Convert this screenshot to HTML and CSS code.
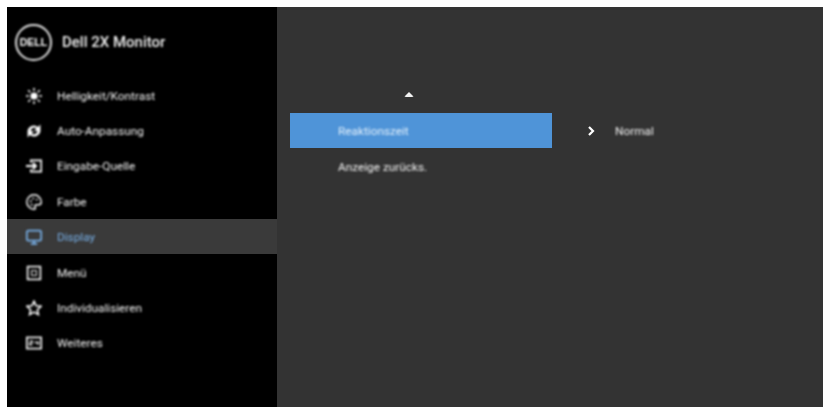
FILE: index.html
```html
<!DOCTYPE html>
<html lang="de">
<head>
<meta charset="utf-8">
<title>Dell 2X Monitor</title>
<link rel="stylesheet" href="styles.css">
</head>
<body>
<div class="osd">
  <aside class="sidebar">
    <header class="brand">
      <div class="logo"><span class="logo-text">DELL</span></div>
      <span class="brand-name">Dell 2X Monitor</span>
    </header>
    <nav class="menu">
      <div class="item">
        <svg class="icon" viewBox="0 0 20 20"><circle cx="10" cy="10" r="4.500" fill="#fff"/><path d="M10 0v3.500M10 16.500V20M0 10h3.500M16.500 10H20M2.800 2.800l2.500 2.500M14.700 14.700l2.500 2.500M2.800 17.200l2.500-2.500M14.700 5.300l2.500-2.500" stroke="#fff" stroke-width="2" fill="none"/></svg>
        <span>Helligkeit/Kontrast</span>
      </div>
      <div class="item">
        <svg class="icon" viewBox="0 0 20 20"><path d="M2 12a8 8 0 0 1 13-7l3-3v8h-8l3-3a4.500 4.500 0 0 0-7 5zM18 8a8 8 0 0 1-13 7l-3 3v-8h8l-3 3a4.500 4.500 0 0 0 7-5z" fill="#fff"/></svg>
        <span>Auto-Anpassung</span>
      </div>
      <div class="item">
        <svg class="icon" viewBox="0 0 20 20"><path d="M6 6V3h13v14H6v-3" stroke="#fff" stroke-width="2" fill="none"/><path d="M0 10h12M8.500 6l4 4-4 4" stroke="#fff" stroke-width="2.400" fill="none"/></svg>
        <span>Eingabe-Quelle</span>
      </div>
      <div class="item">
        <svg class="icon" viewBox="0 0 20 20"><path d="M10 1a9 9 0 1 0 0 18c2 0 2-1.500 1.300-2.800-.8-1.200 0-2.700 1.500-2.700H16c2 0 3-1 3-3.500C19 5 15 1 10 1z" stroke="#fff" stroke-width="1.800" fill="none"/><circle cx="6" cy="9" r="1.200" fill="#fff"/><circle cx="9" cy="5.500" r="1.200" fill="#fff"/><circle cx="13.500" cy="7" r="1.200" fill="#fff"/><circle cx="7" cy="13.500" r="1.200" fill="#fff"/></svg>
        <span>Farbe</span>
      </div>
      <div class="item active">
        <svg class="icon" viewBox="0 0 20 20"><rect x="1" y="2" width="18" height="12.500" rx="2" stroke="#78b0e8" stroke-width="2.200" fill="none"/><path d="M10 14.500V18M6 18.500h8" stroke="#78b0e8" stroke-width="2.200" fill="none"/></svg>
        <span>Display</span>
      </div>
      <div class="item">
        <svg class="icon" viewBox="0 0 20 20"><rect x="2" y="2" width="16" height="16" stroke="#fff" stroke-width="2" fill="none"/><rect x="7" y="7" width="6" height="6" stroke="#ddd" stroke-width="1.400" fill="none"/></svg>
        <span>Menü</span>
      </div>
      <div class="item">
        <svg class="icon" viewBox="0 0 20 20"><path d="M10 1.500l2.600 5.700 6.200.7-4.600 4.200 1.300 6.100-5.500-3.100-5.500 3.100 1.300-6.100L1.200 7.900l6.200-.7z" stroke="#fff" stroke-width="2" fill="none"/></svg>
        <span>Individualisieren</span>
      </div>
      <div class="item">
        <svg class="icon" viewBox="0 0 20 20"><rect x="1" y="3" width="18" height="14" stroke="#fff" stroke-width="2" fill="none"/><path d="M4.500 7.500h3.500V10H4.500v2.500H8M12 7.500V10h3.500M15.500 7.500v5" stroke="#fff" stroke-width="1.400" fill="none"/></svg>
        <span>Weiteres</span>
      </div>
    </nav>
  </aside>
  <main class="panel">
    <div class="caret"></div>
    <div class="rows">
      <div class="row-line">
        <div class="option selected"><span class="soft">Reaktionszeit</span></div>
        <svg class="chevron" viewBox="0 0 8 10"><path d="M2 1l4 4-4 4" stroke="#fff" stroke-width="2.200" fill="none"/></svg>
        <span class="value soft">Normal</span>
      </div>
      <div class="option second"><span class="soft">Anzeige zurücks.</span></div>
    </div>
  </main>
</div>
</body>
</html>
```

FILE: styles.css
```css
html, body {
  margin: 0;
  height: 100%;
  background: #fff;
  overflow: hidden;
}

body {
  font-family: "Roboto", "Liberation Sans", sans-serif;
}

.osd {
  display: flex;
  width: 823px;
  height: 407px;
  padding: 7px 0 0 7px;
  box-sizing: border-box;
}

.sidebar {
  width: 270px;
  background: #000;
  color: #f4f4f4;
  display: flex;
  flex-direction: column;
}

.brand {
  display: flex;
  align-items: center;
  height: 70px;
  padding-left: 8px;
  gap: 10px;
}

.logo {
  width: 33px;
  height: 33px;
  border: 2px solid #e0e0e0;
  border-radius: 50%;
  display: flex;
  align-items: center;
  justify-content: center;
  filter: blur(0.8px);
}

.logo-text {
  font-family: "Liberation Sans", sans-serif;
  font-size: 10.500px;
  font-weight: 700;
  color: #fff;
}

.brand-name {
  font-size: 15px;
  font-weight: 500;
  color: #f0f0f0;
  filter: blur(0.8px);
}

.menu {
  display: flex;
  flex-direction: column;
  padding-top: 1px;
}

.item {
  display: flex;
  align-items: center;
  height: 35.4px;
  padding-left: 19px;
  gap: 15px;
  font-size: 11.800px;
  box-sizing: border-box;
}

.item > span,
.item > svg {
  filter: blur(0.8px);
}

.icon {
  width: 16px;
  height: 16px;
  flex: none;
}

.item.active {
  height: 35px;
  margin: -1px 0 1.400px;
  padding-top: 1px;
  background: #3a3a3a;
  color: #78b0e8;
}

.panel {
  flex: 1;
  background: #333;
  color: #f4f4f4;
  font-size: 11.800px;
}

.caret {
  width: 0;
  height: 0;
  margin: 85px 0 0 127px;
  border-left: 5px solid transparent;
  border-right: 5px solid transparent;
  border-bottom: 5px solid #f2f2f2;
  border-radius: 2px;
  filter: blur(0.5px);
}

.rows {
  margin: 16px 0 0 13px;
  display: flex;
  flex-direction: column;
}

.row-line {
  display: flex;
  align-items: center;
}

.option {
  width: 262px;
  height: 35px;
  padding-left: 48px;
  box-sizing: border-box;
  display: flex;
  align-items: center;
}

.soft {
  filter: blur(0.8px);
}

.second {
  margin-top: 1px;
}

.selected {
  background: #4f94d8;
  color: #e2f0fc;
}

.chevron {
  width: 8px;
  height: 10px;
  margin-left: 35px;
  filter: blur(0.4px);
}

.value {
  margin-left: 20px;
}
```
